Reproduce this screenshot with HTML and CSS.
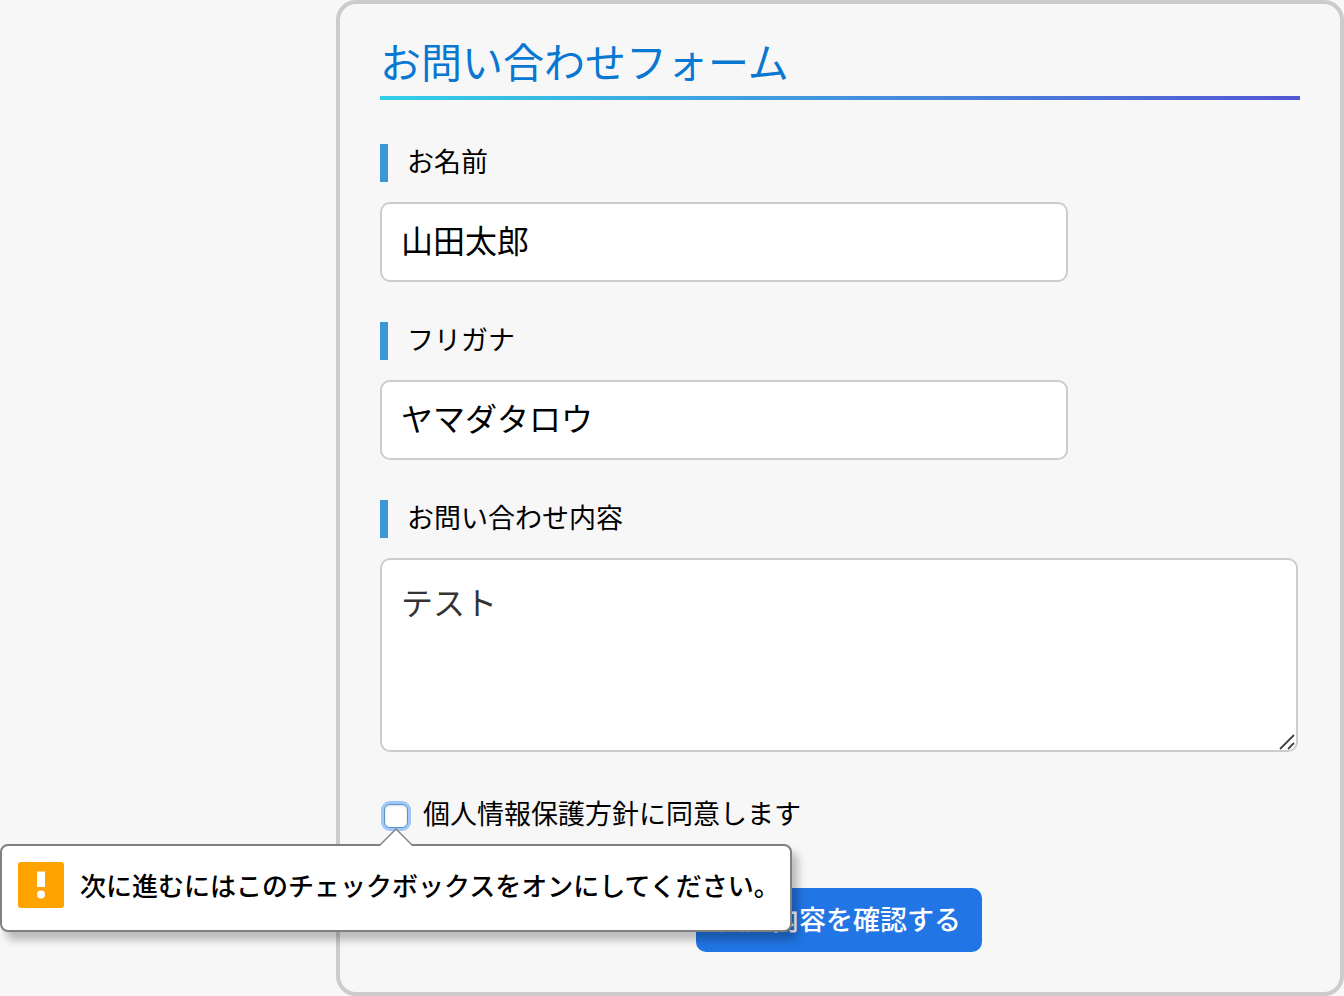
FILE: index.html
```html
<!DOCTYPE html>
<html lang="ja">
<head>
  <meta charset="utf-8">
  <meta name="viewport" content="width=device-width, initial-scale=1">
  <title>お問い合わせフォーム</title>
  <link rel="stylesheet" href="styles.css">
</head>
<body>
  <main class="page">
    <form class="contact">
      <h1 class="contact-title">お問い合わせフォーム</h1>
      <div class="field">
        <label class="field-label" for="name">お名前</label>
        <input class="text-box" id="name" type="text" value="山田太郎">
      </div>
      <div class="field">
        <label class="field-label" for="kana">フリガナ</label>
        <input class="text-box" id="kana" type="text" value="ヤマダタロウ">
      </div>
      <div class="field">
        <label class="field-label" for="message">お問い合わせ内容</label>
        <div class="message-wrap">
          <textarea class="message" id="message">テスト</textarea>
          <svg class="grip" viewBox="0 0 16 16" aria-hidden="true"><path d="M1 15L15 1M9 15L15 9" fill="none" stroke="#444" stroke-width="1.8"/></svg>
        </div>
      </div>
      <div class="consent">
        <input class="consent-box" id="consent" type="checkbox" aria-describedby="consent-tip">
        <label class="consent-label" for="consent">個人情報保護方針に同意します</label>
        <div class="tip" id="consent-tip" role="alert">
          <svg class="tip-arrow" viewBox="0 0 34 18" aria-hidden="true"><path d="M1 18L2 16.500L17 1L32 16.500L33 18Z" fill="#fff"/><path d="M1 17L17 1L33 17" fill="none" stroke="#808080" stroke-width="1.400"/></svg>
          <svg class="tip-icon" viewBox="0 0 46 46" aria-hidden="true"><rect width="46" height="46" rx="3" fill="#ffa300"/><path d="M19 9.500H27V25H19Z" fill="#fff"/><circle cx="23" cy="32.500" r="4" fill="#fff"/></svg>
          <span>次に進むにはこのチェックボックスをオンにしてください。</span>
        </div>
      </div>
      <button class="submit" type="submit">入力内容を確認する</button>
    </form>
  </main>
</body>
</html>
```

FILE: styles.css
```css
* {
  box-sizing: border-box;
}

body {
  margin: 0;
  background: #f7f7f7;
  color: #000;
  font: 400 27px/38px "Noto Sans CJK JP", sans-serif;
}

.page {
  padding-left: 25%;
}

.contact {
  display: flex;
  flex-direction: column;
  gap: 40px;
  padding: 28px 40px 40px;
  border: 4px solid #ccc;
  border-radius: 20px;
}

.contact-title {
  margin: 0 0 4px;
  padding-bottom: 8px;
  border-bottom: 4px solid;
  border-image: linear-gradient(to right, #30cfe8, #5456d4) 1;
  color: #0878d2;
  font-size: 41px;
  font-weight: 400;
  line-height: 56px;
}

.field {
  display: flex;
  flex-direction: column;
  gap: 20px;
}

.field-label {
  padding-bottom: 4px;
  padding-left: 19px;
  border-left: 8px solid #3b97d5;
  line-height: 34px;
}

.text-box,
.message {
  display: block;
  width: 100%;
  border: 2px solid #ccc;
  border-radius: 10px;
  background: #fff;
  color: #000;
  font: inherit;
  font-size: 32px;
  outline: 0;
}

.text-box {
  max-width: 688px;
  height: 80px;
  padding: 0 19px 6px;
}

.message-wrap {
  position: relative;
  margin-right: 2px;
}

.message {
  height: 194px;
  padding: 17px 19px;
  color: #333;
  line-height: 48px;
  resize: vertical;
}

.message::-webkit-resizer {
  background: transparent;
}

.grip {
  position: absolute;
  right: 3px;
  bottom: 2px;
  width: 16px;
  height: 16px;
  pointer-events: none;
}

.consent {
  position: relative;
  display: flex;
  align-items: center;
  gap: 15px;
  margin-top: 2px;
  padding-left: 4px;
}

.consent-box {
  width: 24px;
  height: 24px;
  margin: 6px 0 0;
  appearance: none;
  border: 1px solid #5b92cc;
  border-radius: 6px;
  background: #fff;
  box-shadow: 0 0 0 3px #9fc8f8, inset 0 1px 2px #ddd;
}

.tip {
  position: absolute;
  top: 50px;
  left: -380px;
  z-index: 1;
  display: flex;
  align-items: center;
  gap: 16px;
  width: 792px;
  height: 88px;
  padding: 0 16px 6px;
  border: 2px solid #808080;
  border-radius: 8px;
  background: #fff;
  box-shadow: 6px 8px 8px rgba(0, 0, 0, .25);
  font-size: 26px;
  font-weight: 500;
  white-space: nowrap;
}

.tip-arrow {
  position: absolute;
  top: -18px;
  left: 377px;
  width: 34px;
  height: 18px;
}

.tip-icon {
  flex: none;
  width: 46px;
  height: 46px;
}

.submit {
  align-self: center;
  margin: 16px 2px 0 0;
  padding: 12px 21px 14px 22px;
  border: 0;
  border-radius: 10px;
  background: #2175e4;
  color: #fff;
  font: inherit;
  font-weight: 500;
}
```
